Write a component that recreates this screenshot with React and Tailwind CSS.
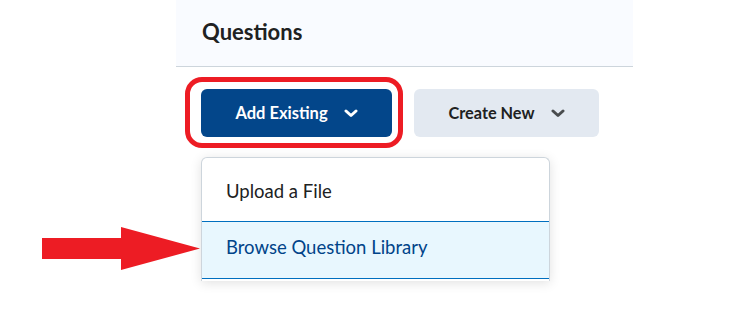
function Chevron({ color }) {
  return (
    <svg width="14" height="9" viewBox="0 0 14 9" fill="none">
      <path
        d="M2 2 L7 6.5 L12 2"
        stroke={color}
        strokeWidth="3"
        strokeLinecap="round"
        strokeLinejoin="round"
      />
    </svg>
  );
}

export default function App() {
  return (
    <div
      className="relative w-[750px] h-[316px] bg-white overflow-hidden"
      style={{ fontFamily: "Lato, 'Noto Sans', sans-serif" }}
    >
      {/* red annotation arrow */}
      <svg
        className="absolute left-[42px] top-[227px]"
        width="158"
        height="43"
        viewBox="0 0 158 43"
      >
        <polygon
          points="0,11 79,11 79,0 158,21.5 79,43 79,32 0,32"
          fill="#ed1c24"
        />
      </svg>

      <div className="ml-[176px] w-[457px]">
        {/* HEADER */}
        <div className="h-[67px] bg-[#f9fbff] border-b border-[#cdd5dc] flex items-center pl-[26px] pb-[4px]">
          <h1 className="text-[22px] font-bold text-[#202122]">Questions</h1>
        </div>

        {/* BUTTONS */}
        <div className="relative flex gap-[22px] pl-[25px] mt-[22px]">
          <div className="relative">
            <div className="absolute left-[-16px] top-[-12px] w-[218px] h-[71px] border-[5px] border-[#ed1c24] rounded-[17px]" />
            <button className="relative w-[191px] h-[48px] bg-[#03468a] rounded-[6px] flex items-center justify-center gap-[16px] text-white text-[16.5px] font-bold">
              <span>Add Existing</span>
              <Chevron color="#ffffff" />
            </button>
          </div>
          <button className="w-[185px] h-[48px] bg-[#e3e9f1] rounded-[6px] flex items-center justify-center gap-[16px] text-[#202122] text-[16.3px] font-bold">
            <span>Create New</span>
            <Chevron color="#494c4e" />
          </button>

          {/* DROPDOWN */}
          <div className="absolute left-[25px] top-[68px] w-[349px] h-[124px] bg-white border border-[#cdd5dc] border-b-0 rounded-t-[6px] shadow-[0_2px_12px_rgba(0,0,0,0.12)] overflow-hidden">
            <div className="h-[63px] flex items-center pl-[24px] pt-[4px] text-[18.5px] text-[#202122]">
              Upload a File
            </div>
            <div className="h-[58px] bg-[#e8f7fe] border-y border-[#006fbf] flex items-center pl-[24px] pb-[4px] text-[18.5px] text-[#004489]">
              Browse Question Library
            </div>
          </div>
        </div>
      </div>
    </div>
  );
}
